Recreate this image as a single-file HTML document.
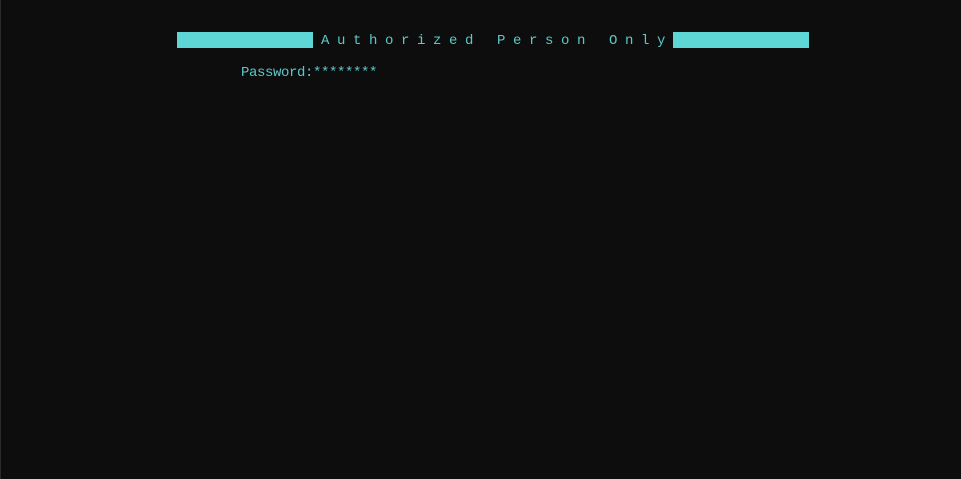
<!DOCTYPE html>
<html><head><style>
html,body{margin:0;padding:0;background:#0d0d0d;width:961px;height:479px;overflow:hidden}
body{position:relative;font-family:"Liberation Mono",monospace;font-size:14px;letter-spacing:-0.4px;color:#5cc9c9}
.l{position:absolute;left:0;width:1px;top:0;height:479px;background:#2a2a2a}
.bar{position:absolute;top:32px;height:16px;background:#5fd6d6}
.t{position:absolute;white-space:pre;line-height:16px}
</style></head><body>
<div class="l"></div>
<div class="bar" style="left:177px;width:136px"></div>
<div class="bar" style="left:673px;width:136px"></div>
<div class="t" style="left:321px;top:33px">A u t h o r i z e d   P e r s o n   O n l y</div>
<div class="t" style="left:241px;top:65px">Password:********</div>
</body></html>
